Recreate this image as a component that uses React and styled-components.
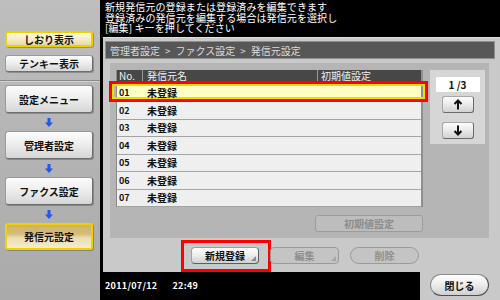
import React from 'react';
import styled, { createGlobalStyle, css } from 'styled-components';

const GlobalStyle = createGlobalStyle`
  html, body { margin: 0; padding: 0; background: #000; }
  body {
    width: 500px; height: 300px; overflow: hidden;
    font-family: "Noto Sans CJK JP", "Noto Sans", sans-serif;
  }
  #root { width: 500px; height: 300px; }
  * { box-sizing: border-box; }
`;

const Screen = styled.div`
  display: flex;
  width: 500px;
  height: 300px;
`;

/* ---------- Sidebar ---------- */
const Sidebar = styled.div`
  width: 100px;
  flex: none;
  background: linear-gradient(180deg, #bebebe 0%, #b3b3b3 55%, #aaaaaa 100%);
  display: flex;
  flex-direction: column;
  padding-top: 31px;
`;

const sideVariants = {
  normal: css`
    border: 1px solid #9a9a9a;
    border-right-color: #6e6e6e;
    border-bottom-color: #6e6e6e;
    background: linear-gradient(180deg, #fdfdfd 0%, #ececec 50%, #d6d6d6 100%);
  `,
  active: css`
    border: 2px solid #efcf00;
    background: linear-gradient(180deg, #fffbe2 0%, #f6eec6 50%, #e6d9a0 100%);
  `,
  current: css`
    border: 2px solid #f0d200;
    background: linear-gradient(180deg, #cdb166 0%, #d6be7c 40%, #e9dcb0 55%, #f4ecd2 100%);
  `,
};

const SideButton = styled.div`
  width: 88px;
  height: ${(p) => p.$h}px;
  margin-left: 5px;
  margin-top: ${(p) => p.$mt || 0}px;
  border-radius: 3px;
  display: flex;
  align-items: center;
  justify-content: center;
  font-size: 10px;
  font-weight: 700;
  color: #111;
  box-shadow: 1px 1px 0 rgba(60, 60, 60, 0.35);
  ${(p) => sideVariants[p.$variant || 'normal']}
`;

const SideSeparator = styled.div`
  width: 100px;
  height: 2px;
  margin-top: 8px;
  border-top: 1px solid #8a8a8a;
  border-bottom: 1px solid #d2d2d2;
`;

const FlowArrow = styled.div`
  width: 88px;
  height: 18px;
  margin-left: 5px;
  display: flex;
  align-items: center;
  justify-content: center;
`;

const BlueArrow = () => (
  <svg width="8" height="9" viewBox="0 0 8 9">
    <polygon points="2.5,0 5.5,0 5.5,4.5 8,4.5 4,9 0,4.5 2.5,4.5" fill="#2457e6" />
  </svg>
);

/* ---------- Main column ---------- */
const Main = styled.div`
  flex: 1;
  display: flex;
  flex-direction: column;
  background: #000;
`;

const Message = styled.div`
  height: 37px;
  padding: 2px 0 0 5px;
  color: #fff;
  font-size: 10px;
  line-height: 10.5px;
  letter-spacing: 0.1px;
  white-space: pre;
`;

const Panel = styled.div`
  margin-left: 3px;
  height: 235px;
  background: #c9c9c9;
  border-top: 1px solid #dedede;
  display: flex;
  flex-direction: column;
`;

const Breadcrumb = styled.div`
  margin: 3px 5px 0 2px;
  height: 18px;
  background: #575757;
  border: 1px solid #8e8e8e;
  color: #dcdcdc;
  font-size: 10px;
  padding-left: 4px;
  display: flex;
  align-items: center;
  gap: 5px;
  white-space: pre;
`;

const Inner = styled.div`
  margin: 4px 11px 0 7px;
  height: 175px;
  background: #b5b5b5;
  display: flex;
  padding: 7px 4px 0 6px;
`;

const LeftCol = styled.div`
  width: 307px;
  display: flex;
  flex-direction: column;
  align-items: flex-end;
`;

const List = styled.div`
  width: 307px;
  background: #fafafa;
  border-left: 1px solid #8a8a8a;
  border-right: 2px solid #8f8f8f;
`;

const HeadRow = styled.div`
  height: 14.5px;
  display: flex;
  align-items: center;
  background: #474747;
  border-bottom: 2px solid #f4f4f4;
  color: #f0f0f0;
  font-size: 10px;
  line-height: 12px;
`;

const HeadCell = styled.div`
  width: ${(p) => p.$w}px;
  height: 12px;
  padding-left: ${(p) => p.$pl}px;
  border-left: ${(p) => (p.$sep ? '1px solid #9a9a9a' : 'none')};
  white-space: nowrap;
`;

const Row = styled.div`
  position: relative;
  height: 17.5px;
  display: flex;
  align-items: center;
  background: ${(p) => (p.$selected ? '#ffffc4' : '#efefef')};
  border-bottom: 1px solid #a3a3a3;
  font-size: 10px;
  font-weight: 700;
  color: #111;
`;

const Cell = styled.div`
  position: relative;
  z-index: 1;
  width: ${(p) => p.$w}px;
  padding-left: ${(p) => p.$pl}px;
  font-size: ${(p) => p.$fs || 10}px;
`;

const SelectMark = styled.div`
  position: absolute;
  left: -8px;
  right: -7px;
  top: -3.5px;
  bottom: -1px;
  border: 3px solid #ff0000;
  box-shadow: inset 0 0 0 2px #f2dc00;
  pointer-events: none;
  z-index: 0;
`;

const DisabledButton = styled.div`
  margin-top: 8px;
  width: 108px;
  height: 17px;
  border: 1px solid #9c9c9c;
  border-radius: 3px;
  background: #bdbdbd;
  color: #8c8c8c;
  font-size: 10px;
  font-weight: 700;
  display: flex;
  align-items: center;
  justify-content: center;
`;

const PagePanel = styled.div`
  margin-left: 7px;
  width: 55px;
  height: 74px;
  background: #d6d6d6;
  display: flex;
  flex-direction: column;
  align-items: center;
  padding-top: 7px;
`;

const PageBox = styled.div`
  width: 44px;
  height: 15px;
  background: #fff;
  font-size: 10px;
  font-weight: 700;
  color: #111;
  display: flex;
  align-items: center;
  justify-content: center;
  white-space: pre;
`;

const ArrowButton = styled.div`
  width: 32px;
  height: 17px;
  margin-top: ${(p) => p.$mt}px;
  border-radius: 3px;
  border: 1px solid #a8a8a8;
  border-right-color: #6a6a6a;
  border-bottom-color: #6a6a6a;
  background: linear-gradient(180deg, #fdfdfd 0%, #e9e9e9 50%, #d2d2d2 100%);
  display: flex;
  align-items: center;
  justify-content: center;
`;

const StepArrow = ({ down }) => (
  <svg width="10" height="11" viewBox="0 0 10 11" style={{ transform: down ? 'rotate(180deg)' : 'none' }}>
    <path d="M5 1.5 V10.5 M1.5 5 L5 1.5 L8.5 5" stroke="#111" strokeWidth="2" fill="none" />
  </svg>
);

const ActionRow = styled.div`
  display: flex;
  gap: 11px;
  margin-top: 9px;
  padding-left: 88px;
`;

const actionVariants = {
  primary: css`
    border: 1px solid #a0a0a0;
    border-right-color: #5e5e5e;
    border-bottom-color: #5e5e5e;
    background: linear-gradient(180deg, #ffffff 0%, #ececec 50%, #d0d0d0 100%);
    color: #111;
    border-radius: 4px;
  `,
  disabled: css`
    border: 1px solid #9a9a9a;
    background: #c4c4c4;
    color: #8e8e8e;
    border-radius: 4px;
  `,
  pill: css`
    border: 1px solid #9a9a9a;
    background: #c4c4c4;
    color: #8e8e8e;
    border-radius: 9px;
  `,
};

const ActionButton = styled.div`
  position: relative;
  width: ${(p) => p.$w}px;
  height: 17px;
  font-size: 10px;
  font-weight: 700;
  display: flex;
  align-items: center;
  justify-content: center;
  ${(p) => actionVariants[p.$variant]}
  ${(p) =>
    p.$corner &&
    css`
      &::after {
        content: '';
        position: absolute;
        right: 2px;
        bottom: 2px;
        width: 0;
        height: 0;
        border-left: 5px solid transparent;
        border-bottom: 5px solid ${p.$variant === 'primary' ? '#8a8a8a' : '#a6a6a6'};
      }
    `}
`;

const HighlightBox = styled.div`
  position: absolute;
  left: -11px;
  right: -13px;
  top: -8px;
  bottom: -9px;
  border: 3px solid #ff0000;
  pointer-events: none;
`;

const BottomRow = styled.div`
  height: 28px;
  display: flex;
`;

const Status = styled.div`
  flex: 1;
  display: flex;
  align-items: center;
  gap: 15px;
  padding: 0 0 2px 5px;
  color: #fff;
  font-size: 9px;
  font-weight: 700;
  letter-spacing: 0.3px;
`;

const CloseArea = styled.div`
  width: 80px;
  background: #c9c9c9;
  padding: 2px 0 0 10px;
`;

const CloseButton = styled.div`
  width: 59px;
  height: 22px;
  border-radius: 11px;
  border: 1px solid #8c8c8c;
  border-right-color: #4e4e4e;
  border-bottom-color: #4e4e4e;
  background: linear-gradient(180deg, #ffffff 0%, #eeeeee 45%, #cfcfcf 100%);
  font-size: 10px;
  font-weight: 700;
  color: #111;
  display: flex;
  align-items: center;
  justify-content: center;
`;

const rows = ['01', '02', '03', '04', '05', '06', '07'];

export default function App() {
  return (
    <>
      <GlobalStyle />
      <Screen>
        <Sidebar>
          <SideButton $h={16} $variant="active">しおり表示</SideButton>
          <SideButton $h={17} $mt={8}>テンキー表示</SideButton>
          <SideSeparator />
          <SideButton $h={28} $mt={3}>設定メニュー</SideButton>
          <FlowArrow><BlueArrow /></FlowArrow>
          <SideButton $h={28}>管理者設定</SideButton>
          <FlowArrow><BlueArrow /></FlowArrow>
          <SideButton $h={28}>ファクス設定</SideButton>
          <FlowArrow><BlueArrow /></FlowArrow>
          <SideButton $h={27} $variant="current">発信元設定</SideButton>
        </Sidebar>
        <Main>
          <Message>
            {'新規発信元の登録または登録済みを編集できます\n登録済みの発信元を編集する場合は発信元を選択し\n[編集] キーを押してください'}
          </Message>
          <Panel>
            <Breadcrumb>
              <span>管理者設定</span>
              <span>&gt;</span>
              <span>ファクス設定</span>
              <span>&gt;</span>
              <span>発信元設定</span>
            </Breadcrumb>
            <Inner>
              <LeftCol>
                <List>
                  <HeadRow>
                    <HeadCell $w={25} $pl={2}>No.</HeadCell>
                    <HeadCell $w={175} $pl={4} $sep>発信元名</HeadCell>
                    <HeadCell $w={104} $pl={3} $sep>初期値設定</HeadCell>
                  </HeadRow>
                  {rows.map((n, i) => (
                    <Row key={n} $selected={i === 0}>
                      {i === 0 && <SelectMark />}
                      <Cell $w={25} $pl={2} $fs={9}>{n}</Cell>
                      <Cell $w={175} $pl={5}>未登録</Cell>
                    </Row>
                  ))}
                </List>
                <DisabledButton>初期値設定</DisabledButton>
              </LeftCol>
              <PagePanel>
                <PageBox>{'1 /3'}</PageBox>
                <ArrowButton $mt={4}><StepArrow /></ArrowButton>
                <ArrowButton $mt={9}><StepArrow down /></ArrowButton>
              </PagePanel>
            </Inner>
            <ActionRow>
              <ActionButton $w={68} $variant="primary" $corner>
                新規登録
                <HighlightBox />
              </ActionButton>
              <ActionButton $w={69} $variant="disabled" $corner>編集</ActionButton>
              <ActionButton $w={69} $variant="pill">削除</ActionButton>
            </ActionRow>
          </Panel>
          <BottomRow>
            <Status>
              <span>2011/07/12</span>
              <span>22:49</span>
            </Status>
            <CloseArea>
              <CloseButton>閉じる</CloseButton>
            </CloseArea>
          </BottomRow>
        </Main>
      </Screen>
    </>
  );
}
